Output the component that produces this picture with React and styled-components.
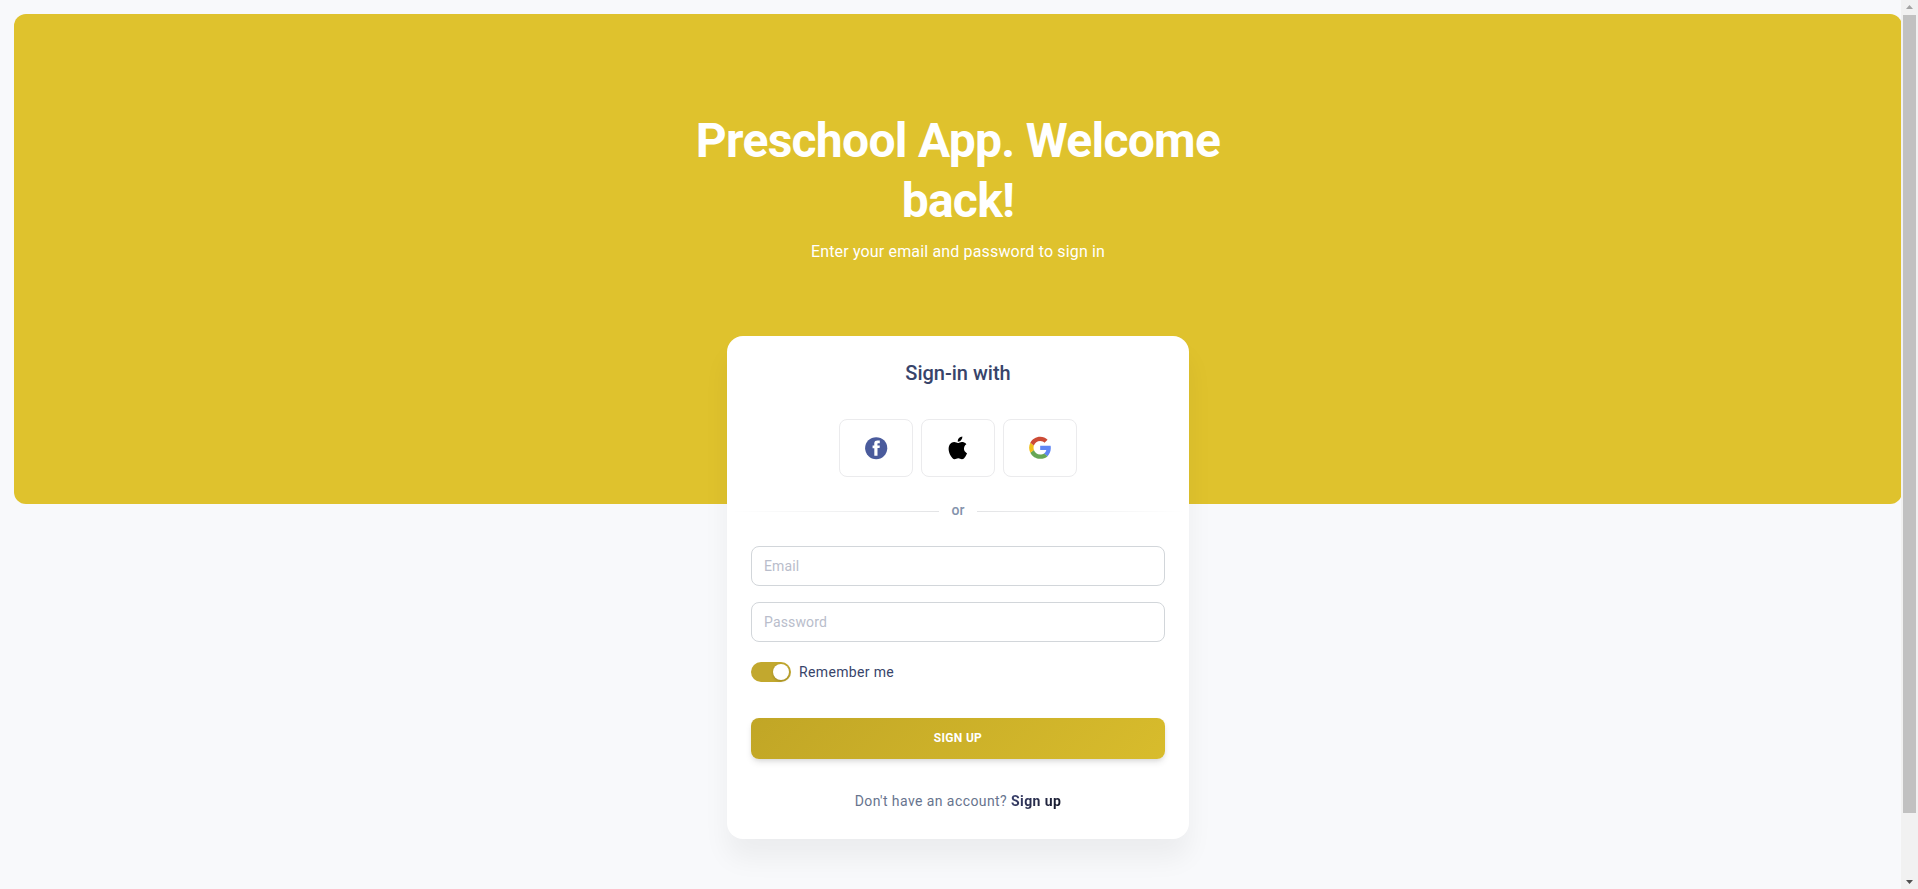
import React from "react";
import styled, { createGlobalStyle } from "styled-components";

const GlobalStyle = createGlobalStyle`
  *, *::before, *::after { box-sizing: border-box; }
  body {
    margin: 0;
    background: #f8f9fb;
    font-family: Roboto, "Liberation Sans", sans-serif;
    color: #38446a;
  }
`;

const Page = styled.div`
  display: flex;
  min-height: 100vh;
`;

const Main = styled.main`
  flex: 1;
  min-width: 0;
  overflow: hidden;
  padding-bottom: 48px;
`;

const Hero = styled.header`
  width: calc(100vw - 30px);
  margin: 14px 0 0 14px;
  padding: 97px 24px 240px;
  border-radius: 12px;
  background: #dfc22d;
  color: #fff;
  text-align: center;
`;

const HeroTitle = styled.h1`
  max-width: 600px;
  margin: 0 auto 8px;
  font-size: 48px;
  line-height: 60px;
  font-weight: 700;
  letter-spacing: -0.015em;
`;

const HeroText = styled.p`
  margin: 0;
  font-size: 16px;
  line-height: 25px;
  letter-spacing: 0.01em;
`;

const CardArea = styled.div`
  width: calc(100vw - 30px);
  margin: -168px 0 0 14px;
  display: flex;
  justify-content: center;
`;

const Card = styled.section`
  width: 100%;
  max-width: 462px;
  padding: 21px 24px 26px;
  border-radius: 16px;
  background: #fff;
  box-shadow: 0 20px 27px rgba(0, 0, 0, 0.05);
`;

const CardTitle = styled.h2`
  margin: 0;
  font-size: 20px;
  line-height: 32px;
  font-weight: 500;
  text-align: center;
`;

const SocialRow = styled.div`
  display: flex;
  justify-content: center;
  gap: 8px;
  margin-top: 30px;
`;

const SocialButton = styled.button`
  display: flex;
  align-items: center;
  justify-content: center;
  width: 74px;
  height: 58px;
  padding: 0;
  border: 1px solid #ebebed;
  border-radius: 8px;
  background: transparent;
  cursor: pointer;
`;

const Divider = styled.div`
  display: flex;
  align-items: center;
  gap: 13px;
  margin: 23px -20px 0;
  font-size: 14px;
  line-height: 20px;
  font-weight: 500;
  color: #8392ab;
`;

const DividerLine = styled.span`
  flex: 1;
  height: 1px;
  margin-top: 2px;
  background: linear-gradient(
    ${(p) => (p.$fade === "left" ? "to left" : "to right")},
    #e3e4e6,
    transparent
  );
`;

const Form = styled.form`
  display: flex;
  flex-direction: column;
  margin-top: 26px;
`;

const TextInput = styled.input`
  width: 100%;
  height: 40px;
  margin-bottom: 16px;
  padding: 8px 12px;
  border: 1px solid #d2d6da;
  border-radius: 8px;
  background: #fff;
  color: #495057;
  font: inherit;
  font-size: 14px;
  letter-spacing: 0.01em;
  &::placeholder { color: #b9bdcb; opacity: 1; }
  &:focus { outline: 2px solid #dfc22d; }
`;

const Remember = styled.label`
  display: flex;
  align-items: center;
  align-self: flex-start;
  gap: 8px;
  margin-top: 4px;
  font-size: 14px;
  line-height: 20px;
  letter-spacing: 0.025em;
  cursor: pointer;
`;

const Switch = styled.input`
  appearance: none;
  display: flex;
  align-items: center;
  width: 40px;
  height: 20px;
  margin: 0;
  padding: 0 2px;
  border-radius: 10px;
  background: #ced4da;
  cursor: pointer;
  &::before {
    content: "";
    width: 16px;
    height: 16px;
    border-radius: 50%;
    background: #fff;
    box-shadow: 0 1px 3px rgba(0, 0, 0, 0.2);
  }
  &:checked {
    justify-content: flex-end;
    background: #c2a82e;
  }
`;

const SubmitButton = styled.button`
  height: 41px;
  margin-top: 36px;
  padding: 0 24px 2px;
  border: 0;
  border-radius: 8px;
  background: linear-gradient(135deg, #c1a626, #d8bc2c);
  box-shadow: 0 4px 7px -1px rgba(0, 0, 0, 0.11), 0 2px 4px -1px rgba(0, 0, 0, 0.07);
  color: #fff;
  font: inherit;
  font-size: 12px;
  font-weight: 700;
  letter-spacing: 0.025em;
  text-transform: uppercase;
  cursor: pointer;
`;

const Footer = styled.p`
  margin: 30px 0 0;
  font-size: 14px;
  line-height: 24px;
  letter-spacing: 0.03em;
  text-align: center;
  color: #67748e;
`;

const FooterLink = styled.a`
  font-weight: 700;
  text-decoration: none;
  background: linear-gradient(310deg, #141727, #3a416f);
  background-clip: text;
  color: transparent;
`;

const ScrollBar = styled.div`
  position: sticky;
  top: 0;
  display: flex;
  flex-direction: column;
  align-items: center;
  width: 17px;
  height: 100vh;
  background: #f1f1f1;
`;

const ScrollArrow = styled.svg`
  display: block;
  flex: none;
  width: 17px;
  height: 15px;
  fill: ${(p) => p.$color};
`;

const ScrollThumb = styled.div`
  flex: 798;
  width: 13px;
  background: #c1c1c1;
`;

const ScrollSpace = styled.div`
  flex: 61;
`;

function FacebookIcon() {
  return (
    <svg width="24" height="24" viewBox="0 0 64 64" aria-hidden="true">
      <g transform="translate(3 3)">
        <circle fill="#4a5b9c" cx="29.5" cy="29.5" r="29.5" />
        <path
          fill="#fff"
          d="M39.1,9.06 L32.57,9.06 C28.69,9.06 24.38,10.69 24.38,16.31 C24.4,18.26 24.38,20.14 24.38,22.25 L19.89,22.25 L19.89,29.39 L24.52,29.39 L24.52,49.93 L33.01,49.93 L33.01,29.25 L38.62,29.25 L39.13,22.23 L32.86,22.23 C32.86,22.23 32.88,19.11 32.86,18.2 C32.86,15.98 35.18,16.11 35.31,16.11 C36.41,16.11 38.55,16.11 39.1,16.11 Z"
        />
      </g>
    </svg>
  );
}

function AppleIcon() {
  return (
    <svg width="24" height="24" viewBox="0 0 64 64" aria-hidden="true">
      <path
        transform="translate(7 0.56)"
        fill="#000"
        d="M40.92,32.84 C41.01,42.07 48.91,45.15 49,45.19 C48.93,45.4 47.74,49.56 44.84,53.86 C42.33,57.58 39.72,61.28 35.62,61.36 C31.59,61.43 30.3,58.93 25.69,58.93 C21.09,58.93 19.65,61.28 15.83,61.43 C11.87,61.58 8.86,57.41 6.33,53.71 C1.16,46.14 -2.79,32.31 2.52,22.98 C5.15,18.34 9.86,15.41 14.97,15.33 C18.86,15.26 22.52,17.98 24.9,17.98 C27.28,17.98 31.73,14.7 36.42,15.19 C38.38,15.27 43.89,15.99 47.43,21.24 C47.14,21.42 40.85,25.13 40.92,32.84 M33.35,10.18 C35.45,7.6 36.87,4.01 36.48,0.44 C33.45,0.56 29.79,2.48 27.62,5.06 C25.67,7.34 23.96,10.99 24.42,14.49 C27.8,14.76 31.25,12.76 33.35,10.18"
      />
    </svg>
  );
}

function GoogleIcon() {
  return (
    <svg width="24" height="24" viewBox="0 0 64 64" aria-hidden="true">
      <g transform="translate(3 2)">
        <path
          fill="#6086f4"
          d="M57.81,30.15 C57.81,27.73 57.62,25.96 57.19,24.12 L29.5,24.12 L29.5,35.07 L45.75,35.07 C45.42,37.79 43.65,41.88 39.72,44.64 L39.67,45 L48.42,51.79 L49.03,51.85 C54.6,46.7 57.81,39.13 57.81,30.15"
        />
        <path
          fill="#66a655"
          d="M29.5,58.99 C37.46,58.99 44.15,56.37 49.03,51.85 L39.72,44.64 C37.23,46.37 33.89,47.59 29.5,47.59 C21.7,47.59 15.08,42.44 12.72,35.33 L12.37,35.36 L3.27,42.41 L3.15,42.74 C8,52.37 17.96,58.99 29.5,58.99"
        />
        <path
          fill="#f0bf1a"
          d="M12.72,35.33 C12.09,33.49 11.73,31.53 11.73,29.5 C11.73,27.46 12.09,25.5 12.68,23.66 L12.67,23.27 L3.45,16.11 L3.15,16.26 C1.15,20.25 0,24.74 0,29.5 C0,34.25 1.15,38.74 3.15,42.74 Z"
        />
        <path
          fill="#cc4b36"
          d="M29.5,11.41 C35.03,11.41 38.77,13.8 40.9,15.8 L49.23,7.67 C44.11,2.92 37.46,0 29.5,0 C17.96,0 8,6.62 3.15,16.26 L12.68,23.66 C15.08,16.55 21.7,11.41 29.5,11.41"
        />
      </g>
    </svg>
  );
}

export default function App() {
  return (
    <>
      <GlobalStyle />
      <Page>
        <Main>
          <Hero>
            <HeroTitle>Preschool App. Welcome back!</HeroTitle>
            <HeroText>Enter your email and password to sign in</HeroText>
          </Hero>
          <CardArea>
            <Card>
              <CardTitle>Sign-in with</CardTitle>
              <SocialRow>
                <SocialButton type="button" aria-label="Facebook">
                  <FacebookIcon />
                </SocialButton>
                <SocialButton type="button" aria-label="Apple">
                  <AppleIcon />
                </SocialButton>
                <SocialButton type="button" aria-label="Google">
                  <GoogleIcon />
                </SocialButton>
              </SocialRow>
              <Divider>
                <DividerLine $fade="left" />
                or
                <DividerLine $fade="right" />
              </Divider>
              <Form onSubmit={(e) => e.preventDefault()}>
                <TextInput type="email" placeholder="Email" aria-label="Email" />
                <TextInput type="password" placeholder="Password" aria-label="Password" />
                <Remember htmlFor="remember">
                  <Switch id="remember" type="checkbox" role="switch" defaultChecked />
                  Remember me
                </Remember>
                <SubmitButton type="submit">Sign up</SubmitButton>
              </Form>
              <Footer>
                Don't have an account? <FooterLink href="#sign-up">Sign up</FooterLink>
              </Footer>
            </Card>
          </CardArea>
        </Main>
        <ScrollBar aria-hidden="true">
          <ScrollArrow viewBox="0 0 17 15" $color="#a3a3a3">
            <path d="M5 9 L8.500 5 L12 9 Z" />
          </ScrollArrow>
          <ScrollThumb />
          <ScrollSpace />
          <ScrollArrow viewBox="0 0 17 15" $color="#505050">
            <path d="M5 6 L12 6 L8.500 10 Z" />
          </ScrollArrow>
        </ScrollBar>
      </Page>
    </>
  );
}
